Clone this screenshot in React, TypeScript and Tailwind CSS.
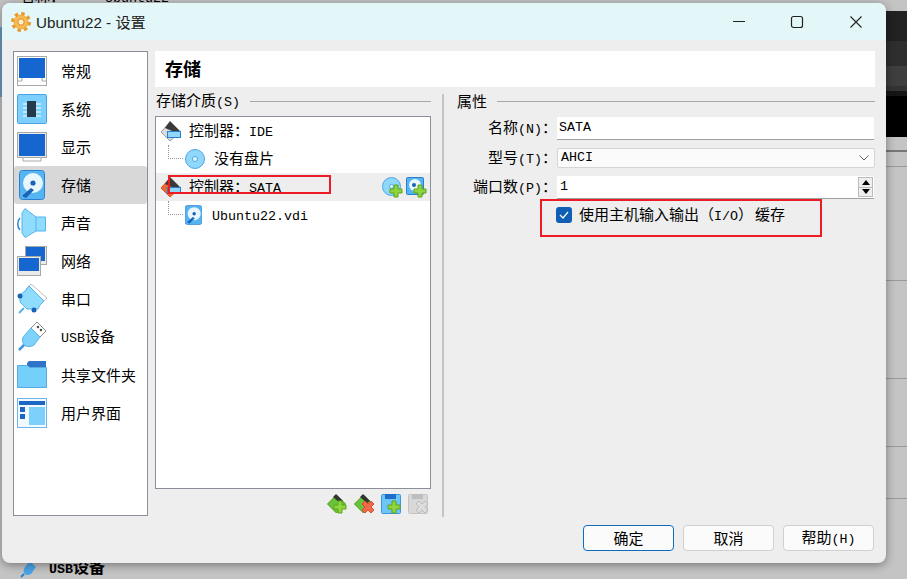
import React from "react";

const Lat = ({ children }: { children: React.ReactNode }) => (
  <span className="font-['Liberation_Mono',monospace] text-[13.33px]">{children}</span>
);

const Gear = () => (
  <svg width="20" height="20" viewBox="0 0 20 20">
    <circle cx="10" cy="10" r="8" fill="none" stroke="#e99a2e" strokeWidth="4" strokeDasharray="3.3 2.98" />
    <circle cx="10" cy="10" r="7" fill="#f7bb52" stroke="#e8a23a" strokeWidth="0.8" />
    <circle cx="10" cy="10" r="3.200" fill="#fdf0c4" stroke="#d98a2b" />
  </svg>
);

const Monitor = ({ low }: { low?: boolean }) => (
  <svg width="30" height="30" viewBox="0 0 30 30">
    {low ? (
      <>
        <rect x="0.500" y="0.500" width="29" height="29" fill="#fff" stroke="#a8a8a8" />
        <rect x="2" y="2" width="26" height="20" fill="#1567cf" />
        <path d="M5 22v3H1" fill="none" stroke="#a8a8a8" />
        <path d="M25 22v3h4" fill="none" stroke="#a8a8a8" />
      </>
    ) : (
      <>
        <path d="M6 25v4h18v-4" fill="#fff" stroke="#a8a8a8" />
        <rect x="0.500" y="0.500" width="29" height="25" fill="#e9e9e9" stroke="#a8a8a8" />
        <rect x="2" y="2" width="26" height="22" fill="#1567cf" />
      </>
    )}
  </svg>
);

const Chip = () => (
  <svg width="30" height="30" viewBox="0 0 30 30">
    <rect x="0.500" y="0.500" width="29" height="29" rx="1" fill="#7cd0fb" stroke="#4aa3e0" />
    <path d="M6 10h18M6 14h18M6 18h18M6 22h18" stroke="#fff" />
    <rect x="10" y="7" width="9" height="16" fill="#27384c" />
  </svg>
);

const Disk = ({ w = 26, h = 30 }: { w?: number; h?: number }) => (
  <svg width={w} height={h} viewBox="0 0 26 30">
    <rect x="0.500" y="0.500" width="25" height="29" rx="3" fill="#55b4f2" stroke="#2a7fd0" />
    <circle cx="14" cy="13" r="10" fill="#e8f6fe" />
    <circle cx="14" cy="13" r="2.600" fill="#1a62b8" />
    <path d="M3 26l9-8 3 2-8 8z" fill="#1a62b8" />
  </svg>
);

const Speaker = () => (
  <svg width="30" height="30" viewBox="0 0 30 30">
    <path d="M8 0.500L19 9h9.500v14H19L8 29.500 5 25V5z" fill="#8fdcfd" stroke="#55b4ea" />
    <path d="M19 9v14" stroke="#55b4ea" />
    <path d="M3 10c-3 3-3 9 0 12" fill="none" stroke="#2a7fd0" strokeWidth="1.500" />
  </svg>
);

const Network = () => (
  <svg width="30" height="30" viewBox="0 0 30 30">
    <rect x="8.500" y="0.500" width="21" height="18" fill="#e9e9e9" stroke="#a8a8a8" />
    <rect x="9" y="1" width="19" height="14" fill="#1567cf" />
    <rect x="0.500" y="10.500" width="23" height="19" fill="#e9e9e9" stroke="#a8a8a8" />
    <rect x="2" y="12" width="20" height="13" fill="#1567cf" />
  </svg>
);

const Serial = () => (
  <svg width="30" height="32" viewBox="0 0 30 32">
    <path d="M14 1l16 14-5 5L9 6z" fill="#fff" stroke="#bdbdbd" />
    <path d="M12 3l15 15-4 4-2 4H10L3 19v-7l5-4z" fill="#8fdcfd" stroke="#55b4ea" />
    <circle cx="3" cy="13" r="2.500" fill="#1a62b8" />
    <circle cx="17" cy="27" r="2.500" fill="#1a62b8" />
    <path d="M7 25l-5 5" stroke="#55b4ea" strokeWidth="2" />
  </svg>
);

const Usb = () => (
  <svg width="30" height="30" viewBox="0 0 30 30">
    <path d="M20 0l9 9-6 6-9-9z" fill="#fff" stroke="#888" />
    <rect x="20" y="4" width="2" height="2" fill="#333" transform="rotate(45 21 5)" />
    <rect x="23" y="7" width="2" height="2" fill="#333" transform="rotate(45 24 8)" />
    <path d="M14 6l9 9-6 8c-3 2-7 2-10 0-2-3-2-7 0-9z" fill="#7fd2fb" stroke="#55b4ea" />
    <path d="M7 23l-5 5" stroke="#3f95dd" strokeWidth="2.500" />
  </svg>
);

const Folder = () => (
  <svg width="30" height="30" viewBox="0 0 30 30">
    <path d="M10 3l2-2h17v6H10z" fill="#2f73c8" />
    <path d="M0.500 5.500h10l2 2h17v20h-29z" fill="#74d0fb" stroke="#58a9e2" />
  </svg>
);

const Ui = () => (
  <svg width="30" height="30" viewBox="0 0 30 30">
    <rect x="0.500" y="0.500" width="29" height="29" fill="#f2f9ff" stroke="#6fb5ea" />
    <rect x="2" y="3" width="26" height="4" fill="#1d67c4" />
    <rect x="3" y="9" width="5" height="5" fill="#1d67c4" />
    <rect x="3" y="16" width="5" height="5" fill="#1d67c4" />
    <rect x="12" y="9" width="16" height="18" fill="#7cd0fb" />
  </svg>
);

const Cd = () => (
  <svg width="20" height="20" viewBox="0 0 20 20">
    <circle cx="10" cy="10" r="9.500" fill="#8fd8fb" stroke="#4da5e6" />
    <circle cx="10" cy="10" r="2.500" fill="#e8f8ff" stroke="#4da5e6" />
  </svg>
);

const Controller = ({ red }: { red?: boolean }) => (
  <svg width="21" height="22" viewBox="0 0 21 22">
    <path d="M1 12l9-10 10 10-10 9z" fill={red ? "#ec6a32" : "#dcdcdc"} stroke={red ? "#d8521f" : "#9c9c9c"} />
    <path d="M5 8l5-7 10 10h-8z" fill="#3a3a3a" />
    <rect x="7.500" y="11.500" width="13" height="6" fill="#8fd8fb" stroke="#2a7fd0" />
  </svg>
);

const Plus = ({ x = 8, y = 8 }: { x?: number; y?: number }) => (
  <path
    d="M4 0h4v4h4v4H8v4H4V8H0V4h4z"
    fill="#8ed43f"
    stroke="#5aa61c"
    transform={`translate(${x} ${y})`}
  />
);

const Cross = ({ fill, edge }: { fill: string; edge: string }) => (
  <path
    d="M3 0l3 3 3-3 3 3-3 3 3 3-3 3-3-3-3 3-3-3 3-3-3-3z"
    fill={fill}
    stroke={edge}
    transform="translate(8 7)"
  />
);

const AddCd = () => (
  <svg width="21" height="21" viewBox="0 0 21 21">
    <circle cx="9.500" cy="9.500" r="9" fill="#8fd8fb" stroke="#4da5e6" />
    <circle cx="9.500" cy="9.500" r="2" fill="#e8f8ff" stroke="#4da5e6" />
    <Plus />
  </svg>
);

const AddDisk = () => (
  <svg width="21" height="21" viewBox="0 0 21 21">
    <rect x="0.500" y="0.500" width="17" height="17" rx="1" fill="#55b4f2" stroke="#2a7fd0" />
    <circle cx="9" cy="8" r="6" fill="#e8f6fe" />
    <circle cx="8" cy="8" r="2" fill="#1a62b8" />
    <Plus />
  </svg>
);

const ToolCtrl = ({ x }: { x?: boolean }) => (
  <svg width="20" height="20" viewBox="0 0 20 20">
    <path d="M0.500 10l9-9 9 9-9 9z" fill="#69c23a" stroke="#4c9a14" />
    <path d="M6 3l3-3 7 7-3 2z" fill="#333" />
    {x ? <Cross fill="#f0694a" edge="#d84e2c" /> : <Plus x={7} y={7} />}
  </svg>
);

const Floppy = ({ off }: { off?: boolean }) => (
  <svg width="20" height="20" viewBox="0 0 20 20">
    <rect x="0.500" y="0.500" width="19" height="19" rx="1" fill={off ? "#d8d8d8" : "#6cc6f8"} stroke={off ? "#c4c4c4" : "#3f95dd"} />
    <rect x="4" y="0" width="11" height="5" fill={off ? "#bdbdbd" : "#1f6dc9"} />
    {off ? <Cross fill="#dcdcdc" edge="#bbb" /> : <Plus x={7} y={7} />}
  </svg>
);

const navItems: { icon: React.ReactNode; label: React.ReactNode; active?: boolean }[] = [
  { icon: <Monitor low />, label: "常规" },
  { icon: <Chip />, label: "系统" },
  { icon: <Monitor />, label: "显示" },
  { icon: <Disk />, label: "存储", active: true },
  { icon: <Speaker />, label: "声音" },
  { icon: <Network />, label: "网络" },
  { icon: <Serial />, label: "串口" },
  { icon: <Usb />, label: <><Lat>USB</Lat>设备</> },
  { icon: <Folder />, label: "共享文件夹" },
  { icon: <Ui />, label: "用户界面" },
];

const GroupTitle = ({ children }: { children: React.ReactNode }) => (
  <div className="flex items-center gap-[10px] h-[20px] pl-px">
    <span>{children}</span>
    <div className="flex-1 h-px bg-[#a8a8a8]" />
  </div>
);

const FieldRow = ({ label, children, h }: { label: React.ReactNode; children: React.ReactNode; h: string }) => (
  <div className={`flex items-center ${h}`}>
    <div className="w-[101px] text-right whitespace-nowrap">{label}</div>
    <div className="flex-1">{children}</div>
  </div>
);

const DialogButton = ({ children, primary }: { children: React.ReactNode; primary?: boolean }) => (
  <button
    className={`w-[91px] h-[26px] rounded-[4px] bg-[#fbfbfb] border ${
      primary ? "border-[#0f6cbd]" : "border-[#d0d0d0]"
    }`}
  >
    {children}
  </button>
);

// lines of the window behind the dialog, seen on its right
const backLines = [166, 280, 378, 446, 498];

export default function App() {
  return (
    <div className="relative w-[907px] h-[579px] overflow-hidden bg-[#c4c4c4] text-[15px] leading-[20px] text-black font-['Noto_Sans_CJK_SC','Liberation_Sans',sans-serif]">
      {/* dimmed window behind the dialog */}
      <div className="absolute z-10 left-[886px] top-[11px] w-[21px] h-[126px] flex flex-col">
        <div className="h-[30px] bg-[#222222]" />
        <div className="h-[25px] bg-[#2e2e2e]" />
        <div className="h-[20px] bg-[#3e3e3e]" />
        <div className="h-[5px] bg-[#333333]" />
        <div className="h-[5px] bg-[#151515]" />
        <div className="flex-1 bg-black" />
      </div>
      <div className="absolute z-10 left-[886px] top-[150px] w-[21px] h-[2px] bg-[#777777]" />
      {backLines.map((y) => (
        <div key={y} className="absolute z-10 left-[886px] w-[21px] h-px bg-[#999999]" style={{ top: y }} />
      ))}
      <div className="absolute left-0 top-[27px] w-[2px] h-[70px] bg-[#6f9bc0]" />
      <div className="absolute left-[20px] top-[-14px] flex gap-[40px] whitespace-nowrap">
        <span>名称：</span>
        <span><Lat>Ubuntu22</Lat></span>
      </div>
      <div className="absolute left-[20px] top-[556px] flex items-center gap-[9px] h-[24px] font-bold text-[16px]">
        <svg width="20" height="20" viewBox="0 0 20 20">
          <path d="M10 3l6 6-5 7c-3 2-6 1-7-1-1-2 0-5 1-6z" fill="#4aa5e6" />
          <path d="M4 16l-3 3" stroke="#2a7fd0" strokeWidth="2" />
        </svg>
        <span><Lat>USB</Lat>设备</span>
      </div>

      <div className="absolute z-20 left-[2px] top-[3px] w-[884px] h-[560px] flex flex-col rounded-[8px] overflow-hidden bg-[#eeeeee] shadow-[0_2px_10px_rgba(0,0,0,0.4)]">
        {/* title bar */}
        <div className="flex items-center h-[37px] shrink-0 bg-[#e3f7f8] pl-[9px]">
          <Gear />
          <span className="ml-[5px] text-[15.2px] text-[#222]">
            <span className="font-['Liberation_Sans',sans-serif]">Ubuntu22 - </span>设置
          </span>
          <div className="flex-1" />
          <svg width="14" height="14" viewBox="0 0 14 14" className="mr-[44px] text-[#222]">
            <path d="M1 6.500h12" stroke="currentColor" />
          </svg>
          <svg width="14" height="14" viewBox="0 0 14 14" className="mr-[45px] text-[#222]">
            <rect x="1.500" y="1.500" width="11" height="11" rx="2" fill="none" stroke="currentColor" strokeWidth="1.200" />
          </svg>
          <svg width="14" height="14" viewBox="0 0 14 14" className="mr-[23px] text-[#222]">
            <path d="M1.500 1.500l11 11M12.500 1.500l-11 11" stroke="currentColor" strokeWidth="1.100" />
          </svg>
        </div>

        {/* body */}
        <div className="flex-1 min-h-0 flex pl-[11px] pr-[11px] pt-[11px]">
          {/* sidebar */}
          <div className="w-[135px] h-[465px] shrink-0 bg-white border border-[#8b8f99] flex flex-col">
            {navItems.map((item, i) => (
              <div
                key={i}
                className={`flex items-center h-[38px] shrink-0 pl-[3px] ${item.active ? "bg-[#d8d8d8] rounded-[3px]" : ""}`}
              >
                <div className="w-[30px] h-[30px] flex items-center justify-center shrink-0">{item.icon}</div>
                <div className="ml-[14px] whitespace-nowrap">{item.label}</div>
              </div>
            ))}
          </div>

          <div className="flex-1 min-w-0 ml-[7px] flex flex-col">
            {/* page title */}
            <div className="h-[36px] shrink-0 bg-white flex items-center pl-[10px] pb-[2px] text-[18px] font-bold">存储</div>

            <div className="flex flex-1 min-h-0 mt-[4px]">
              {/* storage tree */}
              <div className="w-[276px] shrink-0 flex flex-col">
                <GroupTitle>存储介质<Lat>(S)</Lat></GroupTitle>
                <div className="relative mt-[5px] h-[373px] bg-white border border-[#8b8f99] flex flex-col">
                  <div className="flex items-center h-[28px] pl-[4px]">
                    <Controller />
                    <span className="ml-[8px]">控制器：<Lat>IDE</Lat></span>
                  </div>
                  <div className="flex items-center h-[28px] pl-[12px]">
                    <div className="w-[15px] h-[14px] -mt-[14px] border-l border-b border-dotted border-[#999999]" />
                    <div className="ml-[2px]"><Cd /></div>
                    <span className="ml-[9px] pb-[2px]">没有盘片</span>
                  </div>
                  <div className="flex items-center h-[28px] pl-[4px] bg-[#eeeeee]">
                    <Controller red />
                    <span className="ml-[8px]">控制器：<Lat>SATA</Lat></span>
                    <div className="flex-1" />
                    <div className="flex gap-[3px] pr-[3px]">
                      <AddCd />
                      <AddDisk />
                    </div>
                  </div>
                  <div className="flex items-center h-[28px] pl-[12px]">
                    <div className="w-[15px] h-[14px] -mt-[14px] border-l border-b border-dotted border-[#999999]" />
                    <div className="ml-[2px] flex"><Disk w={17} h={20} /></div>
                    <span className="ml-[10px]"><Lat>Ubuntu22.vdi</Lat></span>
                  </div>
                  {/* red annotation box */}
                  <div className="absolute left-[12px] top-[58px] w-[163px] h-[19px] border-2 border-[#ed1c24]" />
                </div>
                <div className="flex justify-end gap-[7px] mt-[5px] pr-[3px]">
                  <ToolCtrl />
                  <ToolCtrl x />
                  <Floppy />
                  <Floppy off />
                </div>
              </div>

              <div className="w-[2px] h-[423px] mt-[3px] ml-[11px] bg-[#c4c4c4] shrink-0" />

              {/* attributes */}
              <div className="flex-1 min-w-0 ml-[12px] flex flex-col">
                <GroupTitle>属性</GroupTitle>
                <div className="mt-[6px] flex flex-col gap-[8px]">
                  <FieldRow h="h-[23px]" label={<>名称<Lat>(N)</Lat>：</>}>
                    <div className="h-[23px] mr-px bg-white border-b border-[#a0a0a0] flex items-center pl-[2px]"><Lat>SATA</Lat></div>
                  </FieldRow>
                  <FieldRow h="h-[20px]" label={<>型号<Lat>(T)</Lat>：</>}>
                    <div className="h-[20px] bg-[#fbfbfb] border border-[#d5d5d5] rounded-[2px] flex items-center pl-[3px] pr-[5px] justify-between">
                      <Lat>AHCI</Lat>
                      <svg width="10" height="6" viewBox="0 0 10 6">
                        <path d="M0.500 0.500L5 5l4.500-4.500" fill="none" stroke="#666" />
                      </svg>
                    </div>
                  </FieldRow>
                  <FieldRow h="h-[23px]" label={<>端口数<Lat>(P)</Lat>：</>}>
                    <div className="h-[23px] mr-px bg-white border-b border-[#a0a0a0] flex items-center pl-[3px] pr-px justify-between">
                      <Lat>1</Lat>
                      <div className="flex flex-col w-[15px] h-[20px] border border-[#bbbbbb] bg-[#eeeeee]">
                        <div className="flex-1 flex items-center justify-center border-b border-[#bbbbbb]">
                          <div className="w-0 h-0 border-x-[4px] border-x-transparent border-b-[5px] border-b-black" />
                        </div>
                        <div className="flex-1 flex items-center justify-center">
                          <div className="w-0 h-0 border-x-[4px] border-x-transparent border-t-[5px] border-t-black" />
                        </div>
                      </div>
                    </div>
                  </FieldRow>
                </div>
                <div className="relative h-[38px] flex items-center pl-[100px] pb-[6px]">
                  <div className="w-[16px] h-[16px] rounded-[3px] bg-[#0f5fb5] flex items-center justify-center shrink-0">
                    <svg width="10" height="8" viewBox="0 0 10 8">
                      <path d="M1 4l3 3 5-6" fill="none" stroke="#fff" strokeWidth="1.200" />
                    </svg>
                  </div>
                  <span className="ml-[7px] whitespace-nowrap">使用主机输入输出（<Lat>I/O</Lat>）<span className="ml-[2px]">缓存</span></span>
                  {/* red annotation box */}
                  <div className="absolute left-[84px] top-0 w-[282px] h-[38px] border-2 border-[#ed1c24]" />
                </div>
              </div>
            </div>
          </div>
        </div>

        {/* buttons */}
        <div className="h-[46px] shrink-0 flex justify-end items-start gap-[9px] pr-[12px] pt-[8px]">
          <DialogButton primary>确定</DialogButton>
          <DialogButton>取消</DialogButton>
          <DialogButton>帮助<Lat>(H)</Lat></DialogButton>
        </div>
      </div>
    </div>
  );
}
